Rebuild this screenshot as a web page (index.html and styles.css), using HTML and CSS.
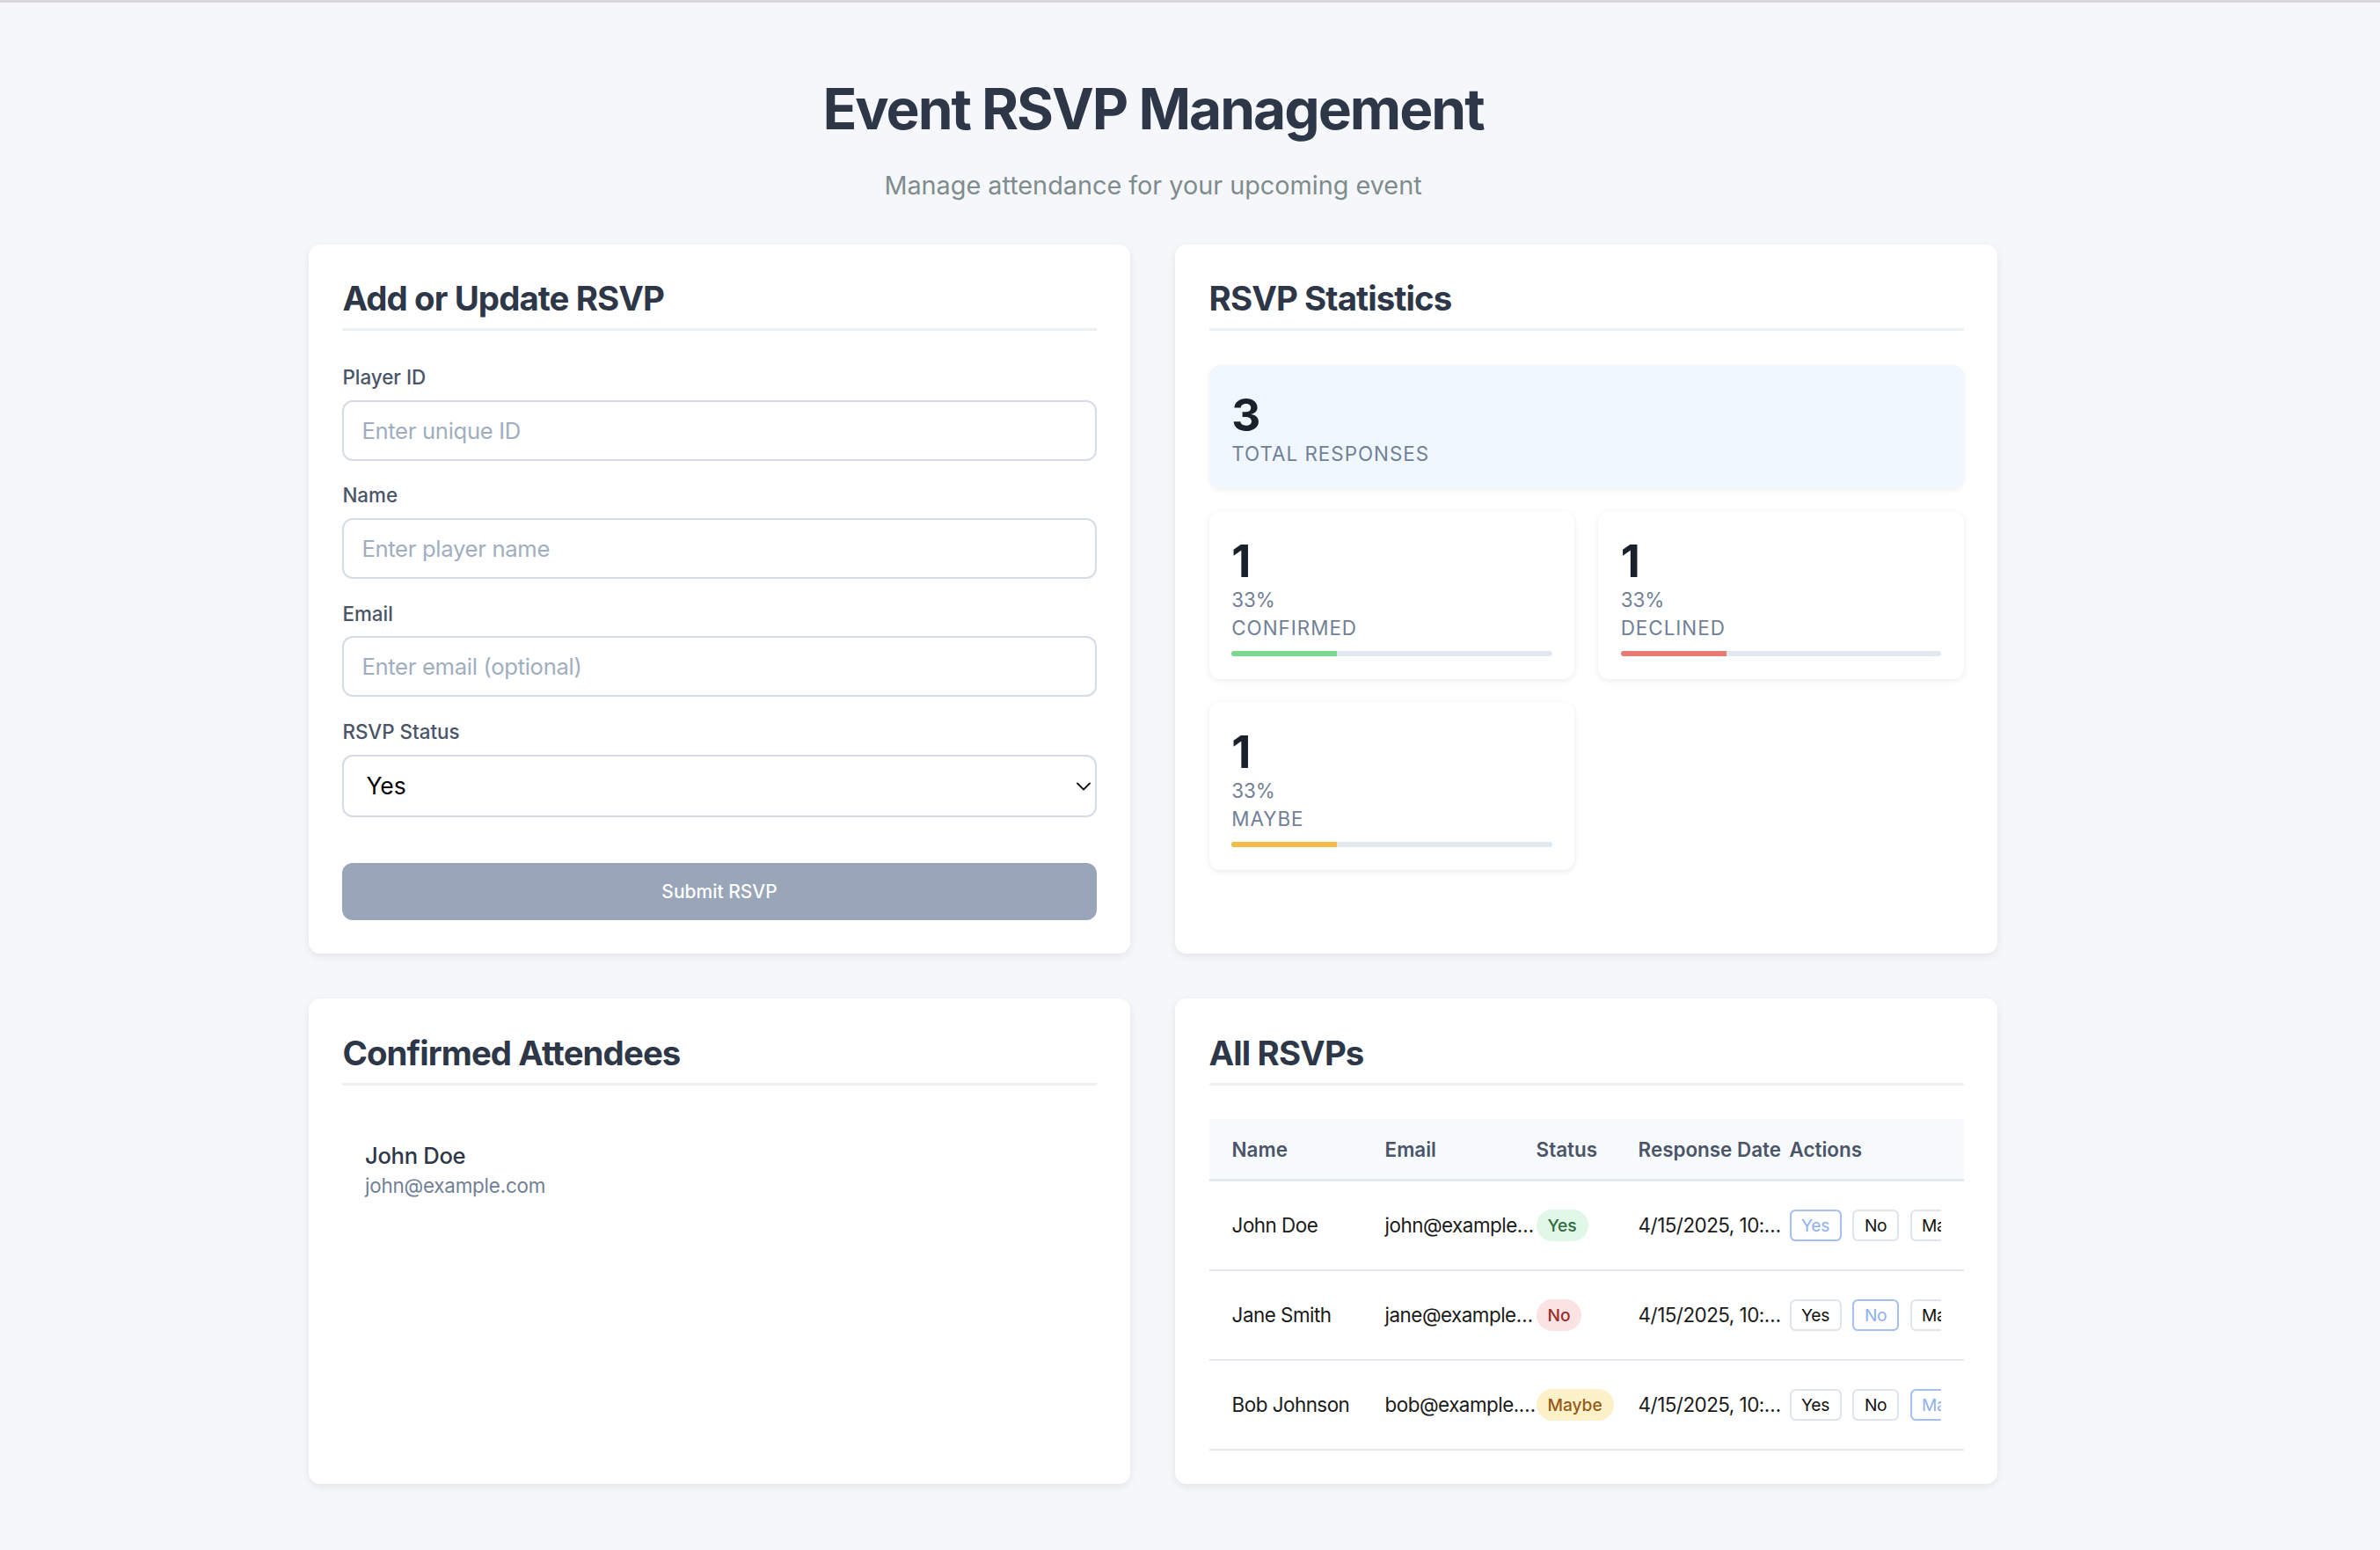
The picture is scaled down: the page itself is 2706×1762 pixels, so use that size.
FILE: index.html
```html
<!DOCTYPE html>
<html lang="en">
<head>
<meta charset="utf-8">
<title>Event RSVP Management</title>
<link rel="stylesheet" href="styles.css">
</head>
<body>
<div class="page">
  <header class="header">
    <h1 class="title">Event RSVP Management</h1>
    <p class="subtitle">Manage attendance for your upcoming event</p>
  </header>

  <main class="grid">
    <section class="card">
      <h2 class="card-title">Add or Update RSVP</h2>
      <form class="form">
        <div class="field">
          <label class="label" for="pid">Player ID</label>
          <input class="input" id="pid" type="text" placeholder="Enter unique ID">
        </div>
        <div class="field">
          <label class="label" for="pname">Name</label>
          <input class="input" id="pname" type="text" placeholder="Enter player name">
        </div>
        <div class="field">
          <label class="label" for="pemail">Email</label>
          <input class="input" id="pemail" type="email" placeholder="Enter email (optional)">
        </div>
        <div class="field">
          <label class="label" for="pstatus">RSVP Status</label>
          <div class="select-wrap">
            <select class="select" id="pstatus">
              <option>Yes</option>
              <option>No</option>
              <option>Maybe</option>
            </select>
            <svg class="chevron" width="16" height="10" viewBox="0 0 16 10" aria-hidden="true"><path d="M1 1.5 L8 8.5 L15 1.5" fill="none" stroke="#111" stroke-width="1.8" stroke-linecap="round" stroke-linejoin="round"/></svg>
          </div>
        </div>
        <button class="submit" type="button">Submit RSVP</button>
      </form>
    </section>

    <section class="card">
      <h2 class="card-title">RSVP Statistics</h2>
      <div class="total">
        <div class="stat-num">3</div>
        <div class="stat-label">Total Responses</div>
      </div>
      <div class="stats-grid">
        <div class="stat-card">
          <div class="stat-num">1</div>
          <div class="stat-pct">33%</div>
          <div class="stat-label">Confirmed</div>
          <div class="bar"><div class="fill fill-green" style="width:33%"></div></div>
        </div>
        <div class="stat-card">
          <div class="stat-num">1</div>
          <div class="stat-pct">33%</div>
          <div class="stat-label">Declined</div>
          <div class="bar"><div class="fill fill-red" style="width:33%"></div></div>
        </div>
        <div class="stat-card">
          <div class="stat-num">1</div>
          <div class="stat-pct">33%</div>
          <div class="stat-label">Maybe</div>
          <div class="bar"><div class="fill fill-yellow" style="width:33%"></div></div>
        </div>
      </div>
    </section>

    <section class="card">
      <h2 class="card-title">Confirmed Attendees</h2>
      <ul class="attendees">
        <li class="attendee">
          <div class="att-name">John Doe</div>
          <div class="att-email">john@example.com</div>
        </li>
      </ul>
    </section>

    <section class="card">
      <h2 class="card-title">All RSVPs</h2>
      <table class="table">
        <colgroup>
          <col class="c-name"><col class="c-email"><col class="c-status"><col class="c-date"><col class="c-actions">
        </colgroup>
        <thead>
          <tr>
            <th class="first">Name</th>
            <th>Email</th>
            <th class="status">Status</th>
            <th>Response Date</th>
            <th>Actions</th>
          </tr>
        </thead>
        <tbody>
          <tr>
            <td class="first">John Doe</td>
            <td>john@example.com</td>
            <td class="status"><span class="badge badge-yes">Yes</span></td>
            <td>4/15/2025, 10:30:00 AM</td>
            <td><div class="actions"><button class="act active" type="button">Yes</button><button class="act" type="button">No</button><button class="act" type="button">Maybe</button></div></td>
          </tr>
          <tr>
            <td class="first">Jane Smith</td>
            <td>jane@example.com</td>
            <td class="status"><span class="badge badge-no">No</span></td>
            <td>4/15/2025, 10:35:00 AM</td>
            <td><div class="actions"><button class="act" type="button">Yes</button><button class="act active" type="button">No</button><button class="act" type="button">Maybe</button></div></td>
          </tr>
          <tr>
            <td class="first">Bob Johnson</td>
            <td>bob@example.com</td>
            <td class="status"><span class="badge badge-maybe">Maybe</span></td>
            <td>4/15/2025, 10:40:00 AM</td>
            <td><div class="actions"><button class="act" type="button">Yes</button><button class="act" type="button">No</button><button class="act active" type="button">Maybe</button></div></td>
          </tr>
        </tbody>
      </table>
    </section>
  </main>
</div>
</body>
</html>
```

FILE: styles.css
```css
* { box-sizing: border-box; }

html, body { margin: 0; padding: 0; }

body {
  background: #f5f7fa;
  font-family: Inter, "Noto Sans", sans-serif;
  color: #2d3748;
  border-top: 3px solid #d9d9dd;
  min-height: 1762px;
}

.page {
  width: 2622px;
  padding-bottom: 70px;
}

.header {
  text-align: center;
  padding-top: 82px;
}

.title {
  margin: 0 0 31px;
  font-size: 64px;
  font-weight: 700;
  line-height: normal;
  color: #2d3748;
  letter-spacing: -2px;
}

.subtitle {
  margin: 0;
  font-size: 28.8px;
  line-height: normal;
  color: #7f8c8d;
}

.grid {
  width: 1920px;
  margin: 50px auto 0;
  display: grid;
  grid-template-columns: 1fr 1fr;
  gap: 51.2px;
}

.card {
  background: #fff;
  border-radius: 13px;
  padding: 38.4px;
  box-shadow: 0 3px 10px rgba(0, 0, 0, 0.08);
}

.card-title {
  margin: 0 0 38.4px;
  font-size: 38.4px;
  font-weight: 700;
  line-height: 46px;
  padding-bottom: 11px;
  border-bottom: 3px solid #edf0f2;
  color: #2d3748;
  letter-spacing: -0.9px;
}

/* form */
.form { margin: 0; }

.field { margin-bottom: 25.6px; }

.label {
  display: block;
  font-size: 22.4px;
  font-weight: 500;
  line-height: normal;
  color: #4a5568;
  margin-bottom: 12.8px;
}

.input,
.select {
  display: block;
  width: 100%;
  border: 2px solid #d5dce6;
  border-radius: 12px;
  background: #fff;
  font-family: Inter, "Noto Sans", sans-serif;
  outline: none;
}

.input {
  height: 69px;
  padding: 0 20px;
  font-size: 25.6px;
  color: #2d3748;
  letter-spacing: -0.3px;
}

.input::placeholder { color: #a0aec0; }

.select-wrap { position: relative; }

.select {
  height: 71px;
  padding: 0 25px;
  font-size: 26.5px;
  color: #000;
  appearance: none;
  -webkit-appearance: none;
}

.chevron {
  position: absolute;
  right: 7px;
  top: 31px;
  pointer-events: none;
}

.submit {
  display: block;
  width: 100%;
  height: 65px;
  margin-top: 52px;
  border: none;
  border-radius: 12px;
  background: #99a5b8;
  color: #fff;
  font-family: Inter, "Noto Sans", sans-serif;
  font-size: 21px;
  font-weight: 500;
}

/* stats */
.total {
  background: #f0f7ff;
  border-radius: 13px;
  padding: 25.6px;
  box-shadow: 0 2px 6px rgba(0, 0, 0, 0.06);
  margin-bottom: 25.6px;
}

.stat-num {
  font-size: 51.2px;
  font-weight: 700;
  line-height: normal;
  color: #1a202c;
}

.stat-label {
  font-size: 22.4px;
  line-height: normal;
  color: #718096;
  text-transform: uppercase;
  letter-spacing: 1px;
}

.stats-grid {
  display: grid;
  grid-template-columns: 1fr 1fr;
  gap: 25.6px 27px;
}

.stat-card {
  background: #fff;
  border-radius: 13px;
  padding: 25.6px;
  box-shadow: 0 2px 7px rgba(0, 0, 0, 0.08);
}

.stat-pct {
  font-size: 22.4px;
  line-height: normal;
  color: #718096;
}

.stat-card .stat-label { margin-top: 5px; }

.bar {
  height: 6.4px;
  margin-top: 12.8px;
  background: #e2e8f0;
  border-radius: 4px;
  overflow: hidden;
}

.fill { height: 100%; }
.fill-green { background: #7bd88f; }
.fill-red { background: #e87a74; }
.fill-yellow { background: #f0be46; }

/* attendees */
.attendees {
  list-style: none;
  margin: 0;
  padding: 0;
}

.attendee { padding: 25.6px 25.6px; }

.att-name {
  font-size: 25.6px;
  font-weight: 500;
  line-height: normal;
  color: #2d3748;
  letter-spacing: -0.3px;
}

.att-email {
  margin-top: 5px;
  font-size: 22.4px;
  line-height: normal;
  color: #718096;
  letter-spacing: -0.2px;
}

/* table */
.table {
  width: 100%;
  border-collapse: collapse;
  table-layout: fixed;
  font-size: 22.4px;
}

.c-name { width: 194px; }
.c-email { width: 178px; }
.c-status { width: 110px; }
.c-date { width: 172px; }
.c-actions { width: 204px; }

.table th {
  background: #f7fafc;
  text-align: left;
  font-weight: 600;
  color: #4a5568;
  line-height: normal;
  padding: 20.5px 0 20.5px 6px;
  border-bottom: 3px solid #e2e8f0;
  white-space: nowrap;
}

.table td {
  height: 102px;
  padding: 0 0 0 6px;
  color: #1a1a1a;
  line-height: normal;
  letter-spacing: -0.5px;
  border-bottom: 2px solid #e6eaf0;
  white-space: nowrap;
  overflow: hidden;
  text-overflow: ellipsis;
  vertical-align: middle;
}

.table th.first,
.table td.first { padding-left: 26px; }

.table th.status,
.table td.status { padding-left: 0; }

.badge {
  display: inline-block;
  height: 36px;
  line-height: 36px;
  padding: 0 12.8px;
  border-radius: 18px;
  font-size: 19.2px;
  font-weight: 500;
  letter-spacing: 0;
}

.badge-yes { background: #e1f8e8; color: #2f6b3f; }
.badge-no { background: #fbe3e3; color: #9b2c2c; }
.badge-maybe { background: #fcf1c9; color: #975a16; }

.actions {
  display: flex;
  gap: 12.8px;
  width: 172px;
  overflow: hidden;
}

.act {
  flex: none;
  height: 36px;
  padding: 0 11.5px;
  border: 2px solid #e0e5ec;
  border-radius: 6.4px;
  background: #fff;
  color: #111;
  font-family: Inter, "Noto Sans", sans-serif;
  font-size: 19.2px;
  letter-spacing: -0.3px;
}

.act.active {
  border-color: #a6c0f6;
  color: #8fb0f3;
}
```
